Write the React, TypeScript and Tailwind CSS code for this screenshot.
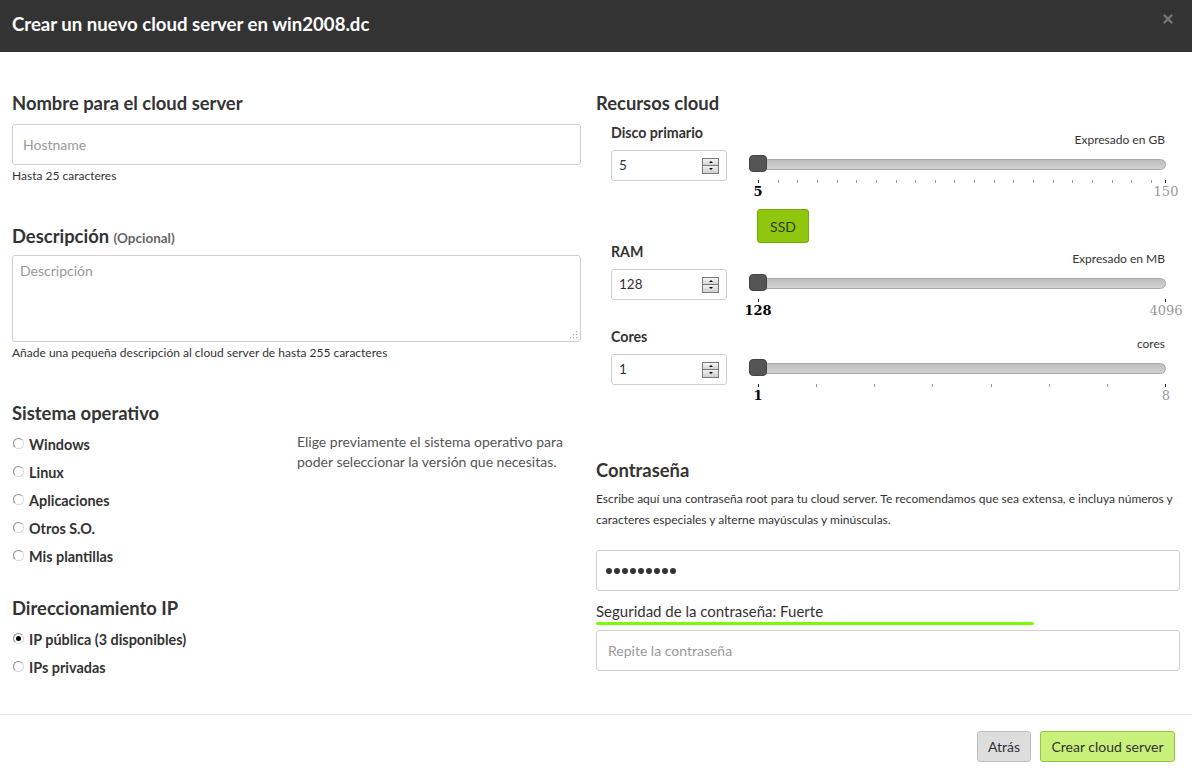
import React from "react";
import { X } from "lucide-react";

function Spinner() {
  return (
    <div className="flex flex-col w-[17px] h-[16px] border border-[#7a7a7a]">
      <div className="flex-1 flex items-center justify-center bg-gradient-to-b from-[#f6f6f6] to-[#d4d4d4] border-b border-[#7a7a7a]">
        <div className="w-0 h-0 border-l-[2px] border-r-[2px] border-b-[2px] border-l-transparent border-r-transparent border-b-black" />
      </div>
      <div className="flex-1 flex items-center justify-center bg-gradient-to-b from-[#f0f0f0] to-[#cfcfcf]">
        <div className="w-0 h-0 border-l-[2px] border-r-[2px] border-t-[2px] border-l-transparent border-r-transparent border-t-black" />
      </div>
    </div>
  );
}

function NumberBox({ value }: { value: string }) {
  return (
    <div className="mt-[8px] h-[31px] w-[116px] border border-[#cfcfcf] rounded-[3px] flex items-center justify-between pl-[7px] pr-[7px] text-[13.5px] text-[#333]">
      <span>{value}</span>
      <Spinner />
    </div>
  );
}

type SliderProps = {
  label: string;
  unit: string;
  value: string;
  min: number;
  max: number;
  ticks: number[];
  minLabel: string;
  maxLabel: string;
};

function Resource({ label, unit, value, min, max, ticks, minLabel, maxLabel }: SliderProps) {
  const pos = (v: number) => 9 + ((v - min) / (max - min)) * 407;
  return (
    <div className="flex">
      <div className="w-[116px] flex flex-col">
        <div className="h-[18px] leading-[18px] text-[14.2px] font-bold text-[#333]">{label}</div>
        <NumberBox value={value} />
      </div>
      <div className="ml-[22px] w-[417px] pt-[8px]">
        <div className="h-[16px] leading-[16px] text-[12px] text-[#333] text-right pr-[1px]">{unit}</div>
        <div className="mt-[7px] h-[17px] relative">
          <div className="absolute left-0 right-0 top-[4px] h-[11px] rounded-full bg-gradient-to-b from-[#bdbdbd] to-[#d2d2d2] border border-[#a9a9a9]" />
          <div className="absolute left-0 top-0 w-[18px] h-[17px] rounded-[4px] bg-[#555] border border-[#444]" />
        </div>
        <div className="h-[25px] relative">
          {ticks.map((t, i) => (
            <div
              key={i}
              className={
                "absolute top-[8px] w-px h-[3px] " +
                (i === 0 || i === ticks.length - 1 ? "bg-[#222]" : "bg-[#999]")
              }
              style={{ left: pos(t) }}
            />
          ))}
          <div
            className="absolute top-[13px] -translate-x-1/2 leading-[14px] text-[13px] font-bold text-black font-['DejaVu_Serif',serif]"
            style={{ left: pos(min) }}
          >
            {minLabel}
          </div>
          <div
            className="absolute top-[13px] -translate-x-1/2 leading-[14px] text-[13px] text-[#999] font-['DejaVu_Serif',serif]"
            style={{ left: pos(max) + 1 }}
          >
            {maxLabel}
          </div>
        </div>
      </div>
    </div>
  );
}

function Radio({ label, checked }: { label: string; checked?: boolean }) {
  return (
    <div className="h-[28px] flex items-center">
      <div className="ml-[1px] mb-[4px] w-[11px] h-[11px] rounded-full border border-[#8a8a8a] border-b-[#d8d8d8] border-r-[#d8d8d8] bg-white flex items-center justify-center">
        {checked && <div className="w-[5px] h-[5px] rounded-full bg-black" />}
      </div>
      <span className="ml-[5px] text-[14.4px] font-bold text-[#333] leading-[28px]">{label}</span>
    </div>
  );
}

export default function App() {
  const diskTicks: number[] = [];
  for (let v = 5; v < 150; v += 7) diskTicks.push(v);
  diskTicks.push(150);
  return (
    <div className="w-[1192px] h-[777px] bg-white font-['Lato','Open_Sans',sans-serif] text-[#333] overflow-hidden">
      <div className="h-[52px] bg-[#333333] flex items-center justify-between pl-[12px] pr-[17px]">
        <h1 className="text-[18.6px] font-bold text-white leading-[24px] -mt-[4px]">
          Crear un nuevo cloud server en win2008.dc
        </h1>
        <X size={14} strokeWidth={4} className="text-[#777] -mt-[14px]" />
      </div>

      <div className="h-[662px] flex pl-[12px] pt-[39px]">
        {/* Left column */}
        <div className="w-[569px] flex flex-col">
          <h2 className="h-[24px] leading-[24px] text-[18.4px] font-bold">Nombre para el cloud server</h2>
          <div className="mt-[9px] h-[41px] border border-[#cfcfcf] rounded-[3px] flex items-center pl-[10px] text-[14px] text-[#999]">
            Hostname
          </div>
          <p className="mt-[3px] text-[12px] leading-[16px]">Hasta 25 caracteres</p>

          <h2 className="mt-[40px] h-[24px] leading-[24px] text-[18.4px] font-bold">
            Descripción <span className="text-[13.5px] text-[#666]">(Opcional)</span>
          </h2>
          <div className="mt-[7px] h-[87px] border border-[#cfcfcf] rounded-[3px] pl-[7px] pt-[7px] text-[14px] leading-[16px] text-[#999] relative">
            Descripción
            <svg className="absolute right-[2px] bottom-[2px]" width="10" height="10" viewBox="0 0 10 10">
              <rect x="8" y="2" width="1.2" height="1.2" fill="#aaa" />
              <rect x="5" y="5" width="1.2" height="1.2" fill="#aaa" />
              <rect x="8" y="5" width="1.2" height="1.2" fill="#aaa" />
              <rect x="2" y="8" width="1.2" height="1.2" fill="#aaa" />
              <rect x="5" y="8" width="1.2" height="1.2" fill="#aaa" />
              <rect x="8" y="8" width="1.2" height="1.2" fill="#aaa" />
            </svg>
          </div>
          <p className="mt-[3px] text-[12px] leading-[16px]">
            Añade una pequeña descripción al cloud server de hasta 255 caracteres
          </p>

          <h2 className="mt-[40px] h-[24px] leading-[24px] text-[18.4px] font-bold">Sistema operativo</h2>
          <div className="mt-[6px] grid grid-cols-[285px_1fr]">
            <div className="flex flex-col">
              <Radio label="Windows" />
              <Radio label="Linux" />
              <Radio label="Aplicaciones" />
              <Radio label="Otros S.O." />
              <Radio label="Mis plantillas" />
            </div>
            <p className="mt-[1px] text-[14px] leading-[20px] text-[#555] pr-[8px]">
              Elige previamente el sistema operativo para poder seleccionar la versión que necesitas.
            </p>
          </div>

          <h2 className="mt-[25px] h-[24px] leading-[24px] text-[18.4px] font-bold">Direccionamiento IP</h2>
          <div className="mt-[6px] flex flex-col">
            <Radio label="IP pública (3 disponibles)" checked />
            <Radio label="IPs privadas" />
          </div>
        </div>

        {/* Right column */}
        <div className="ml-[15px] w-[584px] flex flex-col">
          <h2 className="h-[24px] leading-[24px] text-[18.4px] font-bold">Recursos cloud</h2>
          <div className="mt-[9px] pl-[15px] flex flex-col">
            <Resource
              label="Disco primario"
              unit="Expresado en GB"
              value="5"
              min={5}
              max={150}
              ticks={diskTicks}
              minLabel="5"
              maxLabel="150"
            />
            <div className="mt-[12px] ml-[146px] w-[52px] h-[34px] rounded-[3px] bg-[#8fc70f] border border-[#77a80a] flex items-center justify-center text-[14px] text-[#2f3b1c]">
              SSD
            </div>
            <Resource
              label="RAM"
              unit="Expresado en MB"
              value="128"
              min={128}
              max={4096}
              ticks={[128, 4096]}
              minLabel="128"
              maxLabel="4096"
            />
            <div className="mt-[12px]">
              <Resource
                label="Cores"
                unit="cores"
                value="1"
                min={1}
                max={8}
                ticks={[1, 2, 3, 4, 5, 6, 7, 8]}
                minLabel="1"
                maxLabel="8"
              />
            </div>
          </div>

          <h2 className="mt-[57px] h-[24px] leading-[24px] text-[18.4px] font-bold">Contraseña</h2>
          <p className="mt-[6px] text-[12px] leading-[21px]">
            Escribe aquí una contraseña root para tu cloud server. Te recomendamos que sea extensa, e incluya números y
            caracteres especiales y alterne mayúsculas y minúsculas.
          </p>
          <div className="mt-[20px] h-[41px] border border-[#cfcfcf] rounded-[3px] flex items-center pl-[9px] gap-[2px]">
            {Array.from({ length: 9 }).map((_, i) => (
              <div key={i} className="w-[6px] h-[6px] rounded-full bg-[#333]" />
            ))}
          </div>
          <div className="mt-[11px] text-[15px] leading-[18px] text-[#333]">Seguridad de la contraseña: Fuerte</div>
          <div className="mt-[2px] h-[3px] w-[438px] rounded-full bg-[#7cfc00]" />
          <div className="mt-[5px] h-[41px] border border-[#cfcfcf] rounded-[3px] flex items-center pl-[11px] text-[14px] text-[#999]">
            Repite la contraseña
          </div>
        </div>
      </div>

      <div className="h-[63px] border-t border-[#e5e5e5] flex justify-end items-start pt-[16px] pr-[17px] gap-[9px]">
        <div className="w-[54px] h-[31px] rounded-[3px] bg-[#dddddd] border border-[#bdbdbd] flex items-center justify-center text-[14px] text-[#333]">
          Atrás
        </div>
        <div className="w-[135px] h-[31px] rounded-[3px] bg-[#c8f07a] border border-[#93c63c] flex items-center justify-center text-[14px] text-[#333]">
          Crear cloud server
        </div>
      </div>
    </div>
  );
}
